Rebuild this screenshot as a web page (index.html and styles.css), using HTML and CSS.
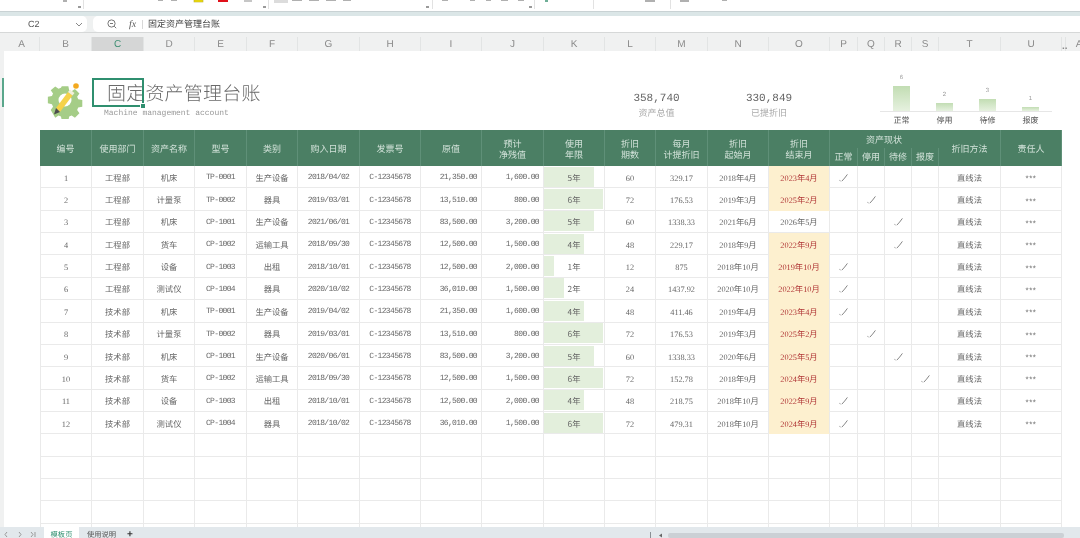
FILE: index.html
```html
<!DOCTYPE html>
<html lang="zh-CN">
<head>
    <meta charset="UTF-8">
    <title>固定资产管理台账</title>
    <link rel="stylesheet" href="styles.css">
</head>
<body>
    <svg class="ribbon" width="1080" height="11" viewBox="0 0 1080 11">
        <g fill="#b0b0b0">
            <rect x="63" y="0" width="4" height="2"/>
            <rect x="158" y="0" width="5" height="1"/>
            <rect x="171" y="0" width="6" height="1"/>
            <rect x="292" y="0" width="10" height="1"/>
            <rect x="309" y="0" width="10" height="1"/>
            <rect x="326" y="0" width="10" height="1"/>
            <rect x="343" y="0" width="8" height="1"/>
            <rect x="442" y="0" width="6" height="1"/>
            <rect x="470" y="0" width="5" height="1"/>
            <rect x="486" y="0" width="5" height="1"/>
            <rect x="501" y="0" width="7" height="1"/>
            <rect x="518" y="0" width="6" height="1"/>
            <rect x="645" y="0" width="10" height="2"/>
            <rect x="680" y="0" width="9" height="2"/>
            <rect x="722" y="0" width="5" height="1"/>
        </g>
        <rect x="194" y="0" width="9" height="2" fill="#f7e300" stroke="#b9ad30" stroke-width=".6"/>
        <rect x="218" y="0" width="10" height="2" fill="#e0101a"/>
        <rect x="244" y="0" width="8" height="2" fill="#c6c6c6"/>
        <rect x="274" y="0" width="14" height="3" fill="#dcdcdc"/>
        <rect x="545" y="0" width="3" height="2" fill="#6fae97"/>
        <g fill="#e2e2e2">
            <rect x="83" y="0" width="1" height="9"/>
            <rect x="268" y="0" width="1" height="9"/>
            <rect x="432" y="0" width="1" height="9"/>
            <rect x="534" y="0" width="1" height="9"/>
            <rect x="593" y="0" width="1" height="9"/>
            <rect x="670" y="0" width="1" height="9"/>
        </g>
        <g fill="#9a9a9a">
            <rect x="78" y="6" width="3" height="2"/>
            <rect x="263" y="6" width="3" height="2"/>
            <rect x="426" y="6" width="3" height="2"/>
            <rect x="529" y="6" width="3" height="2"/>
        </g>
    </svg>
    <div class="ribbon-edge"></div>

    <div class="formula-bar">
        <div class="name-box">
            <span class="cell-ref">C2</span>
            <svg width="8" height="5" viewBox="0 0 8 5"><path d="M1 1l3 3 3-3" fill="none" stroke="#888"/></svg>
        </div>
        <div class="formula-box">
            <svg class="zoom-icon" width="10" height="10" viewBox="0 0 10 10">
                <circle cx="4.5" cy="4.5" r="3.6" fill="none" stroke="#777"/>
                <path d="M3 4.5h3M7.2 7.2l2 2" fill="none" stroke="#777"/>
            </svg>
            <span class="fx">fx</span>
            <span class="formula-sep"></span>
            <span class="formula-text">固定资产管理台账</span>
        </div>
    </div>

    <div class="col-head">
        <div class="w36">A</div>
        <div class="w52">B</div>
        <div class="w52 active">C</div>
        <div class="w51">D</div>
        <div class="w52">E</div>
        <div class="w51">F</div>
        <div class="w62">G</div>
        <div class="w61">H</div>
        <div class="w61">I</div>
        <div class="w62">J</div>
        <div class="w61">K</div>
        <div class="w51">L</div>
        <div class="w52">M</div>
        <div class="w61">N</div>
        <div class="w61">O</div>
        <div class="w28">P</div>
        <div class="w27">Q</div>
        <div class="w27">R</div>
        <div class="w27">S</div>
        <div class="w62">T</div>
        <div class="w61">U</div>
        <div class="hidden-cols">..</div>
        <div class="w27">A</div>
    </div>

    <svg class="defs" width="0" height="0">
        <symbol id="chk" viewBox="0 0 9 8">
            <path d="M.5 6.4l1 .5M2.800 7.200C4.600 5.400 6.600 3 8.400.4" fill="none" stroke="#666" stroke-width=".8"/>
        </symbol>
    </svg>

    <div class="workspace">
        <div class="row-head"><div class="row-mark"></div></div>
        <div class="sheet">
            <div class="banner">
                <svg class="logo" width="38" height="38" viewBox="0 0 38 38">
                    <path fill="#a5cd87" d="M15 2h8l1 5 3 1.300 4-2.800 5.500 5.500-2.800 4 1.300 3 5 1v8l-5 1-1.300 3 2.800 4-5.500 5.500-4-2.800-3 1.300-1 5h-8l-1-5-3-1.300-4 2.800L1.500 31l2.800-4-1.300-3-5-1v-8l5-1 1.300-3-2.800-4L7 2.500l4 2.800 3-1.300z" transform="translate(3.500 3.500) scale(.82)"/>
                    <circle cx="19" cy="19" r="6.500" fill="#fff"/>
                    <path d="M10 27L22 11l4.500 3.500L14 31z" fill="#f5d24a"/>
                    <path d="M22 11l2-2.500 4.500 3.500-2 2.500z" fill="#f3f0dc"/>
                    <path d="M10 27l4 4-6 2.500z" fill="#4d4d4d"/>
                    <circle cx="30" cy="5" r="2.800" fill="#f3a91f"/>
                </svg>
                <div class="title-block">
                    <h1 class="title">固定资产管理台账</h1>
                    <p class="subtitle">Machine management account</p>
                </div>
                <div class="stat stat-total">
                    <div class="stat-num">358,740</div>
                    <div class="stat-label">资产总值</div>
                </div>
                <div class="stat stat-dep">
                    <div class="stat-num">330,849</div>
                    <div class="stat-label">已提折旧</div>
                </div>
                <div class="chart">
                    <div class="chart-col"><span class="chart-val">6</span><div class="chart-bar h25"></div><span class="chart-name">正常</span></div>
                    <div class="chart-col"><span class="chart-val">2</span><div class="chart-bar h8"></div><span class="chart-name">停用</span></div>
                    <div class="chart-col"><span class="chart-val">3</span><div class="chart-bar h12"></div><span class="chart-name">待修</span></div>
                    <div class="chart-col"><span class="chart-val">1</span><div class="chart-bar h4"></div><span class="chart-name">报废</span></div>
                </div>
                <div class="selected-cell"></div>
            </div>

            <table class="ledger">
                <colgroup>
                    <col class="w52"><col class="w52"><col class="w51"><col class="w52"><col class="w51"><col class="w62"><col class="w61"><col class="w61"><col class="w62"><col class="w61"><col class="w51"><col class="w52"><col class="w61"><col class="w61"><col class="w28"><col class="w27"><col class="w27"><col class="w27"><col class="w62"><col class="w61">
                </colgroup>
                <thead>
                    <tr>
                        <th rowspan="2">编号</th>
                        <th rowspan="2">使用部门</th>
                        <th rowspan="2">资产名称</th>
                        <th rowspan="2">型号</th>
                        <th rowspan="2">类别</th>
                        <th rowspan="2">购入日期</th>
                        <th rowspan="2">发票号</th>
                        <th rowspan="2">原值</th>
                        <th rowspan="2">预计<br>净残值</th>
                        <th rowspan="2">使用<br>年限</th>
                        <th rowspan="2">折旧<br>期数</th>
                        <th rowspan="2">每月<br>计提折旧</th>
                        <th rowspan="2">折旧<br>起始月</th>
                        <th rowspan="2">折旧<br>结束月</th>
                        <th colspan="4" class="group">资产现状</th>
                        <th rowspan="2">折旧方法</th>
                        <th rowspan="2">责任人</th>
                    </tr>
                    <tr>
                        <th class="sub">正常</th>
                        <th class="sub">停用</th>
                        <th class="sub">待修</th>
                        <th class="sub">报废</th>
                    </tr>
                </thead>
                <tbody>
                    <tr><td class="no">1</td><td>工程部</td><td>机床</td><td class="mono">TP-0001</td><td>生产设备</td><td class="mono">2018/04/02</td><td class="mono">C-12345678</td><td class="mono right">21,350.00</td><td class="mono right">1,600.00</td><td class="life" style="background-size:50px 20px">5年</td><td class="no">60</td><td class="no">329.17</td><td class="no">2018年4月</td><td class="no due">2023年4月</td><td><svg class="chk"><use href="#chk"/></svg></td><td></td><td></td><td></td><td>直线法</td><td class="stars">***</td></tr>
                    <tr><td class="no">2</td><td>工程部</td><td>计量泵</td><td class="mono">TP-0002</td><td>器具</td><td class="mono">2019/03/01</td><td class="mono">C-12345678</td><td class="mono right">13,510.00</td><td class="mono right">800.00</td><td class="life" style="background-size:59px 20px">6年</td><td class="no">72</td><td class="no">176.53</td><td class="no">2019年3月</td><td class="no due">2025年2月</td><td></td><td><svg class="chk"><use href="#chk"/></svg></td><td></td><td></td><td>直线法</td><td class="stars">***</td></tr>
                    <tr><td class="no">3</td><td>工程部</td><td>机床</td><td class="mono">CP-1001</td><td>生产设备</td><td class="mono">2021/06/01</td><td class="mono">C-12345678</td><td class="mono right">83,500.00</td><td class="mono right">3,200.00</td><td class="life" style="background-size:50px 20px">5年</td><td class="no">60</td><td class="no">1338.33</td><td class="no">2021年6月</td><td class="no">2026年5月</td><td></td><td></td><td><svg class="chk"><use href="#chk"/></svg></td><td></td><td>直线法</td><td class="stars">***</td></tr>
                    <tr><td class="no">4</td><td>工程部</td><td>货车</td><td class="mono">CP-1002</td><td>运输工具</td><td class="mono">2018/09/30</td><td class="mono">C-12345678</td><td class="mono right">12,500.00</td><td class="mono right">1,500.00</td><td class="life" style="background-size:40px 20px">4年</td><td class="no">48</td><td class="no">229.17</td><td class="no">2018年9月</td><td class="no due">2022年9月</td><td></td><td></td><td><svg class="chk"><use href="#chk"/></svg></td><td></td><td>直线法</td><td class="stars">***</td></tr>
                    <tr><td class="no">5</td><td>工程部</td><td>设备</td><td class="mono">CP-1003</td><td>出租</td><td class="mono">2018/10/01</td><td class="mono">C-12345678</td><td class="mono right">12,500.00</td><td class="mono right">2,000.00</td><td class="life" style="background-size:10px 20px">1年</td><td class="no">12</td><td class="no">875</td><td class="no">2018年10月</td><td class="no due">2019年10月</td><td><svg class="chk"><use href="#chk"/></svg></td><td></td><td></td><td></td><td>直线法</td><td class="stars">***</td></tr>
                    <tr><td class="no">6</td><td>工程部</td><td>测试仪</td><td class="mono">CP-1004</td><td>器具</td><td class="mono">2020/10/02</td><td class="mono">C-12345678</td><td class="mono right">36,010.00</td><td class="mono right">1,500.00</td><td class="life" style="background-size:20px 20px">2年</td><td class="no">24</td><td class="no">1437.92</td><td class="no">2020年10月</td><td class="no due">2022年10月</td><td><svg class="chk"><use href="#chk"/></svg></td><td></td><td></td><td></td><td>直线法</td><td class="stars">***</td></tr>
                    <tr><td class="no">7</td><td>技术部</td><td>机床</td><td class="mono">TP-0001</td><td>生产设备</td><td class="mono">2019/04/02</td><td class="mono">C-12345678</td><td class="mono right">21,350.00</td><td class="mono right">1,600.00</td><td class="life" style="background-size:40px 20px">4年</td><td class="no">48</td><td class="no">411.46</td><td class="no">2019年4月</td><td class="no due">2023年4月</td><td><svg class="chk"><use href="#chk"/></svg></td><td></td><td></td><td></td><td>直线法</td><td class="stars">***</td></tr>
                    <tr><td class="no">8</td><td>技术部</td><td>计量泵</td><td class="mono">TP-0002</td><td>器具</td><td class="mono">2019/03/01</td><td class="mono">C-12345678</td><td class="mono right">13,510.00</td><td class="mono right">800.00</td><td class="life" style="background-size:59px 20px">6年</td><td class="no">72</td><td class="no">176.53</td><td class="no">2019年3月</td><td class="no due">2025年2月</td><td></td><td><svg class="chk"><use href="#chk"/></svg></td><td></td><td></td><td>直线法</td><td class="stars">***</td></tr>
                    <tr><td class="no">9</td><td>技术部</td><td>机床</td><td class="mono">CP-1001</td><td>生产设备</td><td class="mono">2020/06/01</td><td class="mono">C-12345678</td><td class="mono right">83,500.00</td><td class="mono right">3,200.00</td><td class="life" style="background-size:50px 20px">5年</td><td class="no">60</td><td class="no">1338.33</td><td class="no">2020年6月</td><td class="no due">2025年5月</td><td></td><td></td><td><svg class="chk"><use href="#chk"/></svg></td><td></td><td>直线法</td><td class="stars">***</td></tr>
                    <tr><td class="no">10</td><td>技术部</td><td>货车</td><td class="mono">CP-1002</td><td>运输工具</td><td class="mono">2018/09/30</td><td class="mono">C-12345678</td><td class="mono right">12,500.00</td><td class="mono right">1,500.00</td><td class="life" style="background-size:59px 20px">6年</td><td class="no">72</td><td class="no">152.78</td><td class="no">2018年9月</td><td class="no due">2024年9月</td><td></td><td></td><td></td><td><svg class="chk"><use href="#chk"/></svg></td><td>直线法</td><td class="stars">***</td></tr>
                    <tr><td class="no">11</td><td>技术部</td><td>设备</td><td class="mono">CP-1003</td><td>出租</td><td class="mono">2018/10/01</td><td class="mono">C-12345678</td><td class="mono right">12,500.00</td><td class="mono right">2,000.00</td><td class="life" style="background-size:40px 20px">4年</td><td class="no">48</td><td class="no">218.75</td><td class="no">2018年10月</td><td class="no due">2022年9月</td><td><svg class="chk"><use href="#chk"/></svg></td><td></td><td></td><td></td><td>直线法</td><td class="stars">***</td></tr>
                    <tr><td class="no">12</td><td>技术部</td><td>测试仪</td><td class="mono">CP-1004</td><td>器具</td><td class="mono">2018/10/02</td><td class="mono">C-12345678</td><td class="mono right">36,010.00</td><td class="mono right">1,500.00</td><td class="life" style="background-size:59px 20px">6年</td><td class="no">72</td><td class="no">479.31</td><td class="no">2018年10月</td><td class="no due">2024年9月</td><td><svg class="chk"><use href="#chk"/></svg></td><td></td><td></td><td></td><td>直线法</td><td class="stars">***</td></tr>
                    <tr><td></td><td></td><td></td><td></td><td></td><td></td><td></td><td></td><td></td><td></td><td></td><td></td><td></td><td></td><td></td><td></td><td></td><td></td><td></td><td></td></tr>
                    <tr><td></td><td></td><td></td><td></td><td></td><td></td><td></td><td></td><td></td><td></td><td></td><td></td><td></td><td></td><td></td><td></td><td></td><td></td><td></td><td></td></tr>
                    <tr><td></td><td></td><td></td><td></td><td></td><td></td><td></td><td></td><td></td><td></td><td></td><td></td><td></td><td></td><td></td><td></td><td></td><td></td><td></td><td></td></tr>
                    <tr><td></td><td></td><td></td><td></td><td></td><td></td><td></td><td></td><td></td><td></td><td></td><td></td><td></td><td></td><td></td><td></td><td></td><td></td><td></td><td></td></tr>
                    <tr><td></td><td></td><td></td><td></td><td></td><td></td><td></td><td></td><td></td><td></td><td></td><td></td><td></td><td></td><td></td><td></td><td></td><td></td><td></td><td></td></tr>
                </tbody>
            </table>
        </div>
    </div>

    <div class="tab-bar">
        <div class="tab-nav">
            <svg width="36" height="11" viewBox="0 0 36 11"><path d="M7 5L5 7.500l2 2.500M19 5l2 2.500-2 2.500M31 5l2 2.500-2 2.500M35 5v5" fill="none" stroke="#999"/></svg>
        </div>
        <div class="tab current">模板页</div>
        <div class="tab">使用说明</div>
        <div class="tab-add">+</div>
        <div class="scroll-track">
            <svg width="20" height="11" viewBox="0 0 20 11"><path d="M2.500 5v6" stroke="#8a8f94"/><path d="M14 6.500L11 8.500l3 2z" fill="#666"/></svg>
            <div class="scroll-thumb"></div>
        </div>
    </div>
</body>
</html>
```

FILE: styles.css
```css
* {
    box-sizing: border-box;
}
html, body {
    margin: 0;
    height: 538px;
    overflow: hidden;
}
body {
    display: flex;
    flex-direction: column;
    width: 1080px;
    background: #fff;
    font-family: "Noto Sans CJK SC", sans-serif;
    color: #666;
    text-rendering: geometricPrecision;
    filter: blur(.3px);
}
.ribbon {
    display: block;
    flex: none;
    background: #fff;
}
.ribbon-edge {
    flex: none;
    height: 5px;
    background: #dbe6e7;
    border-top: 1px solid #c9d2d4;
}
.defs {
    position: absolute;
}

/* formula bar */
.formula-bar {
    flex: none;
    height: 16px;
    display: flex;
    gap: 6px;
    background: #eff1f1;
}
.name-box {
    width: 87px;
    display: flex;
    align-items: center;
    padding: 0 4px 0 28px;
    justify-content: space-between;
    background: #fff;
    border-radius: 0 5px 5px 0;
}
.cell-ref {
    font: 9px "Liberation Sans", sans-serif;
    color: #555;
}
.formula-box {
    flex: 1;
    display: flex;
    align-items: center;
    padding-left: 14px;
    background: #fff;
    border-radius: 5px 0 0 5px;
}
.fx {
    margin-left: 12px;
    width: 11px;
    font: italic 10px "Liberation Serif", serif;
    color: #555;
}
.formula-sep {
    width: 1px;
    height: 9px;
    margin: 0 5px 0 2px;
    background: #d8d8d8;
}
.formula-text {
    font-size: 9px;
    line-height: 16px;
    color: #444;
}

/* column letters */
.col-head {
    flex: none;
    height: 19px;
    display: flex;
    padding: 4px 0 0 4px;
    background: #f0f1f1;
    border-top: 1px solid #d6d8d8;
    overflow: hidden;
}
.col-head div {
    flex: none;
    height: 15px;
    font: 10px/15px "Liberation Sans", sans-serif;
    color: #8a8a8a;
    text-align: center;
    border-right: 1px solid #e2e4e4;
}
.col-head .active {
    background: #d5d6d6;
    border-bottom: 1px solid #2f8f6f;
    color: #3f8f74;
}
.col-head .hidden-cols {
    width: 4px;
    font-weight: bold;
    line-height: 19px;
}
.w27 { width: 27px; }
.w28 { width: 28px; }
.w36 { width: 36px; }
.w51 { width: 51px; }
.w52 { width: 52px; }
.w61 { width: 61px; }
.w62 { width: 62px; }

/* sheet */
.workspace {
    flex: 1;
    min-height: 0;
    display: flex;
}
.row-head {
    flex: none;
    width: 4px;
    background: #f0f1f1;
}
.row-mark {
    width: 2px;
    height: 29px;
    margin: 27px 0 0 2px;
    background: #5aa78c;
}
.sheet {
    flex: 1;
    min-width: 0;
    padding-left: 36px;
    overflow: hidden;
    background: #fff;
}
.banner {
    position: relative;
    height: 79px;
    display: flex;
}
.logo {
    flex: none;
    margin: 30px 0 0 6px;
}
.title-block {
    width: 521px;
    padding: 27px 0 0 20px;
}
.title {
    margin: 0;
    padding-left: 3px;
    font-size: 19px;
    font-weight: 300;
    line-height: 30px;
    letter-spacing: .2px;
    color: #6a6a6a;
}
.subtitle {
    margin: 1px 0 0;
    font: 8px/10px "Liberation Mono", monospace;
    color: #999;
}
.stat {
    flex: none;
    padding-top: 41px;
    text-align: center;
}
.stat-total { width: 103px; }
.stat-dep { width: 122px; }
.stat-num {
    font: 11px/15px "Liberation Mono", monospace;
    color: #666;
}
.stat-label {
    font-size: 9px;
    line-height: 12px;
    color: #aaa;
}
.chart {
    flex: none;
    width: 172px;
    height: 54px;
    margin: 21px 0 0 50px;
    display: flex;
}
.chart-col {
    flex: 1;
    display: flex;
    flex-direction: column;
    justify-content: flex-end;
    align-items: center;
}
.chart-val {
    font: 6px/9px "Liberation Sans", sans-serif;
    color: #999;
    margin-bottom: 3px;
}
.chart-bar {
    width: 17px;
    background: linear-gradient(#c2ddb3, #e6f1df);
}
.h4 { height: 4px; }
.h8 { height: 8px; }
.h12 { height: 12px; }
.h25 { height: 25px; }
.chart-name {
    align-self: stretch;
    height: 15px;
    padding-top: 3px;
    border-top: 1px solid #e6e6e6;
    font-size: 8px;
    line-height: 12px;
    text-align: center;
    color: #555;
}
.selected-cell {
    position: absolute;
    left: 52px;
    top: 27px;
    width: 52px;
    height: 29px;
    border: 2px solid #2f8f6f;
}
.selected-cell::after {
    content: "";
    position: absolute;
    right: -4px;
    bottom: -4px;
    width: 4px;
    height: 4px;
    background: #2f8f6f;
    border: 1px solid #fff;
}

/* ledger table */
.ledger {
    table-layout: fixed;
    width: 1022px;
    border-collapse: separate;
    border-spacing: 0;
}
.ledger th {
    height: 18px;
    padding: 2px 0 0;
    background: #4b7f64;
    border-right: 1px solid #5f9078;
    font-size: 9px;
    font-weight: 400;
    line-height: 11.5px;
    color: #d2e2d9;
}
.ledger th.group {
    border-right-color: #4b7f64;
}
.ledger th.sub {
    padding-top: 3px;
    vertical-align: top;
    border-right-color: #5f9078;
}
.ledger td {
    height: 22.37px;
    padding: 2px 0 0;
    border-right: 1px solid #eaeaea;
    border-bottom: 1px solid #eaeaea;
    font-size: 8.3px;
    line-height: 12px;
    text-align: center;
    color: #666;
}
.ledger td:first-child {
    border-left: 1px solid #eaeaea;
}
.ledger td.no {
    padding-top: 4px;
    font-family: "Liberation Serif", "Noto Sans CJK SC", serif;
}
.ledger td.mono {
    padding-top: 3px;
    font-family: "Liberation Mono", monospace;
    font-size: 8px;
    letter-spacing: -.65px;
}
.ledger td.right {
    text-align: right;
    padding-right: 4px;
}
.ledger td.life {
    background: linear-gradient(#e3efdc, #e3efdc) no-repeat 0 50%;
}
.ledger td.due {
    background: #fdf0cf;
    border-bottom-color: #fdf0cf;
    color: #b03535;
}
.ledger td.stars {
    padding-top: 4px;
    font: 8px "Liberation Sans", sans-serif;
    letter-spacing: .5px;
}
.chk {
    display: block;
    width: 9px;
    height: 8px;
    margin: 0 auto;
}

/* sheet tabs */
.tab-bar {
    flex: none;
    height: 11px;
    display: flex;
    align-items: flex-start;
    background: #e2e8ec;
    overflow: hidden;
    font-size: 7.300px;
    line-height: 16px;
}
.tab-nav {
    width: 44px;
}
.tab-nav svg {
    display: block;
}
.tab {
    width: 45px;
    height: 16px;
    text-align: center;
    color: #555;
}
.tab.current {
    width: 35px;
    background: #fff;
    color: #2f8f6f;
}
.tab-add {
    width: 12px;
    text-align: center;
    font: bold 10px/15px "Liberation Sans", sans-serif;
    color: #333;
}
.scroll-track {
    margin-left: 512px;
    display: flex;
    align-items: flex-start;
}
.scroll-thumb {
    flex: none;
    height: 5px;
    width: 396px;
    margin-top: 6px;
    background: #cbd0d5;
    border-radius: 2px;
}
```
